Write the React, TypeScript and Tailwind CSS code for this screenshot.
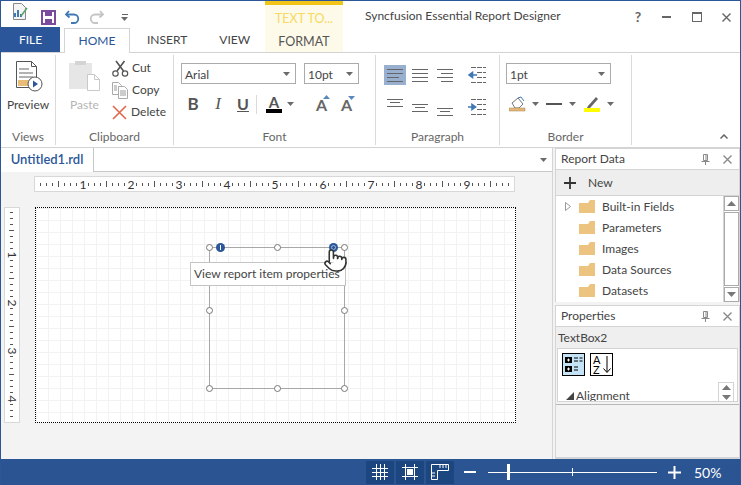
import { Pointer } from "lucide-react";

function Caret({ className = "" }: { className?: string }) {
  return (
    <svg width="7" height="4" viewBox="0 0 7 4" className={className}>
      <path d="M0 0h7L3.5 4z" fill="#6a6a6a" />
    </svg>
  );
}

function Combo({ label, width }: { label: string; width: string }) {
  return (
    <div className={`${width} h-[21px] border border-[#ababab] bg-white flex items-center justify-between pl-[3px] pr-[5px] text-[12px] text-[#444]`}>
      <span className="pt-[2px]">{label}</span>
      <Caret />
    </div>
  );
}

function RibbonGroup({ label, width, children }: { label: string; width: string; children: React.ReactNode }) {
  return (
    <div className={`${width} shrink-0 flex flex-col border-r border-[#dadada] my-[2px]`}>
      <div className="flex-1 relative">{children}</div>
      <div className="h-[17px] text-center text-[12px] text-[#666] leading-[17px]">{label}</div>
    </div>
  );
}

function PreviewIcon() {
  return (
    <svg width="30" height="34" viewBox="0 0 30 34">
      <path d="M3.5 1.5h15l5 5v21h-20z" fill="#fff" stroke="#555" />
      <path d="M18.500 1.500v5h5" fill="none" stroke="#555" />
      <path d="M6 9h10M6 13h14M6 17h14" stroke="#9a9a9a" strokeWidth="1.5" />
      <rect x="5" y="20" width="12" height="6" fill="#e9bd77" />
      <circle cx="22" cy="24" r="7" fill="#fff" stroke="#555" />
      <path d="M20 20.500l5 3.500-5 3.500z" fill="#2b579a" />
    </svg>
  );
}

function PasteIcon() {
  return (
    <svg width="31" height="31" viewBox="0 0 31 31">
      <rect x="0" y="3" width="23" height="26" fill="#e6e6e6" />
      <rect x="6" y="1" width="11" height="4" fill="#d4d4d4" />
      <path d="M18.5 14.5h7l5 5v11h-12z" fill="#fff" stroke="#c9c9c9" />
      <path d="M25.5 14.5v5h5" fill="none" stroke="#c9c9c9" />
    </svg>
  );
}

function CutIcon() {
  return (
    <svg width="17" height="17" viewBox="0 0 17 17" fill="none" stroke="#555" strokeWidth="1.2">
      <circle cx="3.5" cy="13.5" r="2.7" />
      <circle cx="13" cy="13.5" r="2.7" />
      <path d="M5 11L12.5 1M11.5 11L4 1" strokeWidth="1.6" />
    </svg>
  );
}

function CopyIcon() {
  return (
    <svg width="16" height="17" viewBox="0 0 16 17" fill="#fff" stroke="#aaa">
      <path d="M.5.5h6l3 3v9h-9z" />
      <path d="M6.5 4.5h6l3 3v9h-9z" />
      <path d="M2 4h3M2 6h3M2 8h3M8 9h6M8 11h6M8 13h6" stroke="#999" />
    </svg>
  );
}

function DeleteIcon() {
  return (
    <svg width="15" height="15" viewBox="0 0 15 15">
      <path d="M1 1l13 13M14 1L1 14" stroke="#e2674a" strokeWidth="1.6" />
    </svg>
  );
}

function AlignIcon({ rows }: { rows: [number, number][] }) {
  return (
    <svg width="22" height="20" viewBox="0 0 22 20" stroke="#666">
      {rows.map(([x, w], i) => (
        <path key={i} d={`M${x} ${4.5 + i * 4}h${w}`} />
      ))}
    </svg>
  );
}

function VAlignIcon({ y }: { y: number }) {
  return (
    <svg width="22" height="20" viewBox="0 0 22 20" stroke="#666">
      <path d={`M3 ${y + 0.5}h16M6 ${y + 3.5}h10M3 ${y + 7.5}h16`} />
    </svg>
  );
}

function IndentIcon({ flip }: { flip?: boolean }) {
  return (
    <svg width="18" height="18" viewBox="0 0 18 18">
      <path d="M3 1.5h15M9 6.5h9M9 11.5h9M3 16.5h15" stroke="#666" strokeDasharray="5 1" />
      {flip ? (
        <path d="M0 9h6M4 6.5L7.5 9 4 11.5z" stroke="#3f78b5" strokeWidth="1.6" fill="#3f78b5" />
      ) : (
        <path d="M2 9h7M4.5 6.5L1 9l3.5 2.5z" stroke="#3f78b5" strokeWidth="1.6" fill="#3f78b5" />
      )}
    </svg>
  );
}

function GrowA({ up }: { up?: boolean }) {
  return (
    <div className="relative w-[17px] h-[18px] text-[16px] leading-[20px] font-bold text-[#666] text-center">
      A
      <svg width="7" height="4" viewBox="0 0 7 4" className={`absolute right-0 ${up ? "top-0" : "top-px"}`}>
        <path d={up ? "M0 4h7L3.5 0z" : "M0 0h7L3.5 4z"} fill="#5b87bb" />
      </svg>
    </div>
  );
}

function FolderIcon() {
  return (
    <svg width="16" height="13" viewBox="0 0 16 13">
      <path d="M0 3h9l2-3h5v13H0z" fill="#ecc47f" />
    </svg>
  );
}

function PinIcon() {
  return (
    <svg width="9" height="11" viewBox="0 0 9 11" stroke="#8a8a8a" fill="none">
      <path d="M2.5.5h4v6h-4zM.5 7.5h8M4.500 7.500v3.500M5 1v6" />
    </svg>
  );
}

function CloseIcon({ color = "#8a8a8a", size = 9 }: { color?: string; size?: number }) {
  return (
    <svg width={size} height={size} viewBox="0 0 9 9">
      <path d="M.5.5l8 8M8.500.5l-8 8" stroke={color} strokeWidth="1.4" />
    </svg>
  );
}

function PanelHeader({ title }: { title: string }) {
  return (
    <div className="h-[21px] shrink-0 flex items-center pl-[5px] pr-[7px] text-[12px] text-[#444] border-b border-[#d4d4d4]">
      <span className="flex-1">{title}</span>
      <PinIcon />
      <span className="w-[13px]" />
      <CloseIcon />
    </div>
  );
}

function ScrollArrow({ up }: { up?: boolean }) {
  return (
    <svg width="9" height="5" viewBox="0 0 9 5">
      <path d={up ? "M0 5h9L4.500 0z" : "M0 0h9L4.500 5z"} fill="#777" />
    </svg>
  );
}

function RulerH() {
  const ticks = Array.from({ length: 80 }, (_, i) => i);
  return (
    <svg width="479" height="14" viewBox="0 0 479 14" className="block">
      {ticks.map((i) => {
        const x = 6 * i + 5.5;
        if (x > 476 || (i + 1) % 8 === 0) return null;
        return <path key={i} d={(i + 1) % 4 === 0 ? `M${x} 4v6` : `M${x} 6v3`} stroke="#555" />;
      })}
      {[1, 2, 3, 4, 5, 6, 7, 8, 9].map((n) => (
        <text key={n} x={48 * n} y={11.500} textAnchor="middle" fontSize="12" fill="#333">
          {n}
        </text>
      ))}
    </svg>
  );
}

function RulerV() {
  const ticks = Array.from({ length: 36 }, (_, i) => i);
  return (
    <svg width="14" height="214" viewBox="0 0 14 214" className="block">
      {ticks.map((i) => {
        const y = 6 * i + 4.5;
        if ((i + 1) % 8 === 0 || i === 35) return null;
        return <path key={i} d={(i + 1) % 4 === 0 ? `M4 ${y}h5` : `M5 ${y}h3`} stroke="#555" />;
      })}
      {[1, 2, 3, 4].map((n) => (
        <text key={n} x="0" y="0" transform={`translate(3 ${48 * n - 1}) rotate(90)`} textAnchor="middle" fontSize="12" fill="#333">
          {n}
        </text>
      ))}
    </svg>
  );
}

function Handle({ className }: { className: string }) {
  return <div className={`absolute w-[7px] h-[7px] rounded-full bg-white border border-[#777] ${className}`} />;
}

function StatusButton({ children }: { children: React.ReactNode }) {
  return <div className="w-[28px] h-[23px] bg-[#1c4680] flex items-center justify-center">{children}</div>;
}

export default function App() {
  return (
    <div className="w-[741px] h-[485px] flex flex-col bg-white border-x border-t border-[#2b579a] overflow-hidden font-['Lato',sans-serif]">
      {/* title + tabs */}
      <div className="h-[52px] shrink-0 flex border-b border-[#d4d4d4]">
        <div className="w-[264px] shrink-0 flex flex-col">
          <div className="h-[27px] flex items-center pl-[11px] relative">
            <svg width="16" height="18" viewBox="0 0 16 18" className="mb-[5px]">
              <path d="M1.500.5h8l4 4v12h-12z" fill="#f4f4f4" stroke="#888" />
              <path d="M3 14V10M6 14V7M9 14v-3" stroke="#3f78b5" strokeWidth="2" />
              <path d="M9 13l6-8" stroke="#5aa469" strokeWidth="1.500" />
            </svg>
            <svg width="15" height="15" viewBox="0 0 15 15" className="ml-[13px] mt-[7px]">
              <rect x="1" y="1" width="13" height="13" fill="none" stroke="#7b4a9e" strokeWidth="2" />
              <rect x="4" y="1" width="7" height="5" fill="#7b4a9e" />
              <rect x="4" y="9" width="7" height="5" fill="#7b4a9e" />
            </svg>
            <svg width="15" height="14" viewBox="0 0 15 14" className="ml-[9px] mt-[6px]" fill="none">
              <path d="M4 1L1 4.500 4.500 7.500" stroke="#3f78b5" strokeWidth="1.800" />
              <path d="M1.500 4.500H9a4.200 4.200 0 0 1 0 8.500H6" stroke="#3f78b5" strokeWidth="1.800" />
            </svg>
            <svg width="15" height="14" viewBox="0 0 15 14" className="ml-[9px] mt-[6px]" fill="none">
              <path d="M11 1l3 3.500-3.500 3" stroke="#c4c4c4" strokeWidth="1.800" />
              <path d="M13.500 4.500H6a4.200 4.200 0 0 0 0 8.500h3" stroke="#c4c4c4" strokeWidth="1.800" />
            </svg>
            <div className="ml-[17px] mt-[6px] flex flex-col items-center gap-[2px]">
              <div className="w-[6px] h-px bg-[#666]" />
              <Caret />
            </div>
          </div>
          <div className="h-[25px] flex items-end text-[12px] text-[#444]">
            <div className="w-[59px] h-[25px] bg-[#2b579a] text-white flex items-center justify-center">FILE</div>
            <div className="ml-[4px] w-[66px] h-[25px] bg-white border-x border-t border-[#d4d4d4] text-[#2b579a] flex items-center justify-center relative -mb-px z-10">HOME</div>
            <div className="ml-[17px]">
              <div className="h-[24px] leading-[24px]">INSERT</div>
            </div>
            <div className="ml-[32px]">
              <div className="h-[24px] leading-[24px]">VIEW</div>
            </div>
          </div>
        </div>
        <div className="w-[78px] shrink-0 bg-[#fefae9] border-t-[4px] border-[#f0c419] flex flex-col items-center text-[12.5px]">
          <div className="h-[23px] leading-[27px] text-[#f6d95f]">TEXT TO...</div>
          <div className="h-[24px] leading-[27px] text-[#555]">FORMAT</div>
        </div>
        <div className="flex-1 flex items-start relative h-[27px] text-[12px] text-[#444]">
          <div className="ml-[22px] mt-[7px] leading-[16px] flex-1">Syncfusion Essential Report Designer</div>
          <div className="flex items-center mt-[9px] pr-[9px]">
            <span className="text-[14px] font-bold leading-[14px] text-[#666] w-[10px] text-center">?</span>
            <div className="ml-[19px] w-[9px] h-[2px] bg-[#666]" />
            <div className="ml-[21px] w-[10px] h-[10px] border border-t-[2px] border-[#666]" />
            <span className="ml-[20px]"><CloseIcon color="#666" /></span>
          </div>
        </div>
      </div>

      {/* ribbon */}
      <div className="h-[95px] shrink-0 flex border-b border-[#d4d4d4] relative">
        <RibbonGroup label="Views" width="w-[55px]">
          <div className="flex flex-col items-center pt-[5px] text-[12px] text-[#444]">
            <PreviewIcon />
            <span className="mt-[2px]">Preview</span>
          </div>
        </RibbonGroup>
        <RibbonGroup label="Clipboard" width="w-[118px]">
          <div className="flex pl-[13px] pt-[5px] text-[12px] text-[#444]">
            <div className="flex flex-col items-center w-[31px]">
              <PasteIcon />
              <span className="mt-[5px] text-[#b4b4b4]">Paste</span>
            </div>
            <div className="ml-[12px] flex flex-col gap-[4px] -mt-px">
              <div className="h-[18px] flex items-center gap-[3px]"><CutIcon />Cut</div>
              <div className="h-[18px] flex items-center gap-[3px]"><CopyIcon /><span className="ml-[1px]">Copy</span></div>
              <div className="h-[18px] flex items-center gap-[3px]"><DeleteIcon /><span className="ml-[1px]">Delete</span></div>
            </div>
          </div>
        </RibbonGroup>
        <RibbonGroup label="Font" width="w-[202px]">
          <div className="pl-[7px] pt-[8px]">
            <div className="flex gap-[8px]">
              <Combo label="Arial" width="w-[115px]" />
              <Combo label="10pt" width="w-[55px]" />
            </div>
            <div className="flex items-center mt-[10px] pl-[5px] h-[20px] text-[#555]">
              <span className="w-[14px] text-center text-[17px] font-bold">B</span>
              <span className="ml-[11px] w-[14px] text-center text-[17px] italic font-['Liberation_Serif',serif]">I</span>
              <span className="ml-[11px] w-[14px] text-center text-[16px] font-bold underline">U</span>
              <div className="ml-[6px] w-px h-[19px] bg-[#dadada]" />
              <div className="ml-[9px] w-[16px] flex flex-col items-center">
                <span className="text-[15px] font-bold leading-[14px]">A</span>
                <div className="w-[16px] h-[4px] bg-black" />
              </div>
              <Caret className="ml-[5px]" />
              <div className="ml-[19px]"><GrowA up /></div>
              <div className="ml-[8px]"><GrowA /></div>
            </div>
          </div>
        </RibbonGroup>
        <RibbonGroup label="Paragraph" width="w-[124px]">
          <div className="pl-[8px] pt-[10px] flex">
            <div className="grid grid-cols-3 gap-x-[3px] gap-y-[11px] w-[72px]">
              <div className="bg-[#98afd0]"><AlignIcon rows={[[3, 16], [3, 16], [3, 12], [3, 16]]} /></div>
              <AlignIcon rows={[[3, 16], [3, 16], [3, 16], [3, 16]]} />
              <AlignIcon rows={[[3, 16], [7, 12], [3, 16], [7, 12]]} />
              <VAlignIcon y={3} />
              <VAlignIcon y={8} />
              <VAlignIcon y={12} />
            </div>
            <div className="ml-[12px] flex flex-col gap-[14px] pt-[1px]">
              <IndentIcon />
              <IndentIcon flip />
            </div>
          </div>
        </RibbonGroup>
        <RibbonGroup label="Border" width="w-[132px]">
          <div className="pl-[6px] pt-[8px]">
            <Combo label="1pt" width="w-[105px]" />
            <div className="flex items-center mt-[11px] h-[18px] pl-[3px]">
              <svg width="17" height="16" viewBox="0 0 17 16">
                <path d="M3 7l6-5 5 6-4 4H6z" fill="#fff" stroke="#777" />
                <path d="M9 2l3-1 3 4" fill="none" stroke="#3f78b5" />
                <rect x="0" y="12" width="16" height="3" fill="#e6b878" stroke="#a5834f" strokeWidth=".5" />
              </svg>
              <Caret className="ml-[6px]" />
              <div className="ml-[7px] w-[16px] h-[2px] bg-[#555]" />
              <Caret className="ml-[7px]" />
              <svg width="16" height="16" viewBox="0 0 16 16" className="ml-[8px]">
                <path d="M4 10l8-9 2 2-8 9H3z" fill="#666" />
                <rect x="0" y="12" width="16" height="4" fill="#ffff00" />
              </svg>
              <Caret className="ml-[7px]" />
            </div>
          </div>
        </RibbonGroup>
        <svg width="8" height="5" viewBox="0 0 8 5" className="absolute right-[12px] bottom-[8px]" fill="none">
          <path d="M.5 4.500l3.500-3.500 3.500 3.500" stroke="#666" strokeWidth="1.500" />
        </svg>
      </div>

      {/* body */}
      <div className="flex-1 min-h-0 flex bg-[#f3f3f3]">
        <div className="w-[552px] shrink-0 flex flex-col border-r border-[#d4d4d4]">
          <div className="h-[24px] shrink-0 flex bg-white relative">
            <div className="w-[92px] flex items-center justify-center text-[13px] text-[#2b579a] font-semibold">Untitled1.rdl</div>
            <div className="flex-1 border-l border-b border-[#c8c8c8] flex items-center justify-end pr-[5px]">
              <Caret />
            </div>
          </div>
          <div className="flex-1 relative min-h-0 pt-[5px] pl-[33px]">
            <div className="w-[479px] h-[14px] bg-white border border-[#d8d8d8] box-content -mt-px">
              <RulerH />
            </div>
            <div className="flex mt-[15px] -ml-[30px]">
              <div className="w-[14px] h-[214px] bg-white border border-[#d8d8d8] box-content">
                <RulerV />
              </div>
              <div className="ml-[15px] w-[481px] h-[216px] relative border border-dotted border-black bg-white bg-[linear-gradient(#f2f2f2_1px,transparent_1px),linear-gradient(90deg,#f2f2f2_1px,transparent_1px)] bg-[size:12px_12px]">
                {/* selected textbox sits on the design surface */}
                <div className="absolute left-[173px] top-[39px] w-[136px] h-[142px] border border-[#a8a8a8]" />
                <Handle className="left-[170px] top-[36px]" />
                <Handle className="left-[238px] top-[36px]" />
                <Handle className="left-[305px] top-[36px]" />
                <Handle className="left-[170px] top-[99px]" />
                <Handle className="left-[305px] top-[99px]" />
                <Handle className="left-[170px] top-[177px]" />
                <Handle className="left-[238px] top-[177px]" />
                <Handle className="left-[305px] top-[177px]" />
                <div className="absolute left-[180px] top-[35px] w-[9px] h-[9px] rounded-full bg-[#2b579a] flex items-center justify-center">
                  <div className="w-px h-[5px] bg-white" />
                </div>
                <div className="absolute left-[293px] top-[35px] w-[9px] h-[9px] rounded-full bg-[#2b579a] flex items-center justify-center">
                  <div className="w-[5px] h-[5px] rounded-full border border-[#9db6d8]" />
                </div>
                <div className="absolute left-[154px] top-[54px] w-[156px] h-[24px] bg-white border border-[#c4c4c4] flex items-center pl-[3px] text-[12px] text-[#444] whitespace-nowrap">
                  View report item properties
                </div>
                <Pointer size={25} fill="#fff" stroke="#333" strokeWidth={1.500} className="absolute left-[287px] top-[40px]" />
              </div>
            </div>
          </div>
        </div>

        {/* side panels */}
        <div className="ml-[2px] flex-1 min-w-0 flex flex-col">
          <div className="h-[154px] shrink-0 flex flex-col bg-white border-x border-t border-[#d4d4d4]">
            <PanelHeader title="Report Data" />
            <div className="h-[25px] shrink-0 bg-[#eeeeee] flex items-center pl-[8px] gap-[12px] text-[12px] text-[#444]">
              <svg width="12" height="12" viewBox="0 0 12 12"><path d="M6 0v12M0 6h12" stroke="#333" strokeWidth="1.800" /></svg>
              <span>New</span>
            </div>
            <div className="flex-1 flex min-h-0 border-t border-[#d4d4d4]">
              <div className="flex-1 text-[12px] text-[#444]">
                {["Built-in Fields", "Parameters", "Images", "Data Sources", "Datasets"].map((name, i) => (
                  <div key={name} className="h-[21px] flex items-center">
                    <div className="w-[23px] flex justify-end pr-[8px]">
                      {i === 0 && (
                        <svg width="6" height="9" viewBox="0 0 6 9"><path d="M.5.500l5 4-5 4z" fill="#fff" stroke="#999" /></svg>
                      )}
                    </div>
                    <FolderIcon />
                    <span className="ml-[7px] pt-[1px]">{name}</span>
                  </div>
                ))}
              </div>
              <div className="w-[16px] shrink-0 flex flex-col border-l border-[#d4d4d4]">
                <div className="h-[15px] border border-[#ababab] flex items-center justify-center"><ScrollArrow up /></div>
                <div className="flex-1 my-[1px] border border-[#ababab]" />
                <div className="h-[15px] border border-[#ababab] flex items-center justify-center"><ScrollArrow /></div>
              </div>
            </div>
          </div>
          <div className="flex-1 min-h-0 mt-[3px] flex flex-col bg-[#f3f3f3] border border-b-[2px] border-[#d4d4d4]">
            <div className="bg-white"><PanelHeader title="Properties" /></div>
            <div className="h-[21px] shrink-0 bg-[#efefef] flex items-center pl-[2px] text-[12px] text-[#444]">TextBox2</div>
            <div className="h-[54px] shrink-0 bg-white border border-[#d4d4d4] mx-px flex flex-col relative overflow-hidden">
              <div className="flex gap-[5px] pl-[4px] pt-[4px]">
                <svg width="23" height="23" viewBox="0 0 23 23">
                  <rect x=".5" y=".5" width="22" height="22" fill="#c5e3f7" stroke="#000" />
                  <rect x="3" y="4" width="7" height="6" fill="#000" />
                  <rect x="3" y="13" width="7" height="6" fill="#000" />
                  <path d="M5 7h3M6.500 5.500v3M5 16h3M6.500 14.500v3" stroke="#fff" />
                  <path d="M12 5h4M12 8h4M17.500 5h3M17.500 8h3M12 14h4M12 17h4" stroke="#000" />
                </svg>
                <div className="w-[23px] h-[23px] border border-black flex">
                  <span className="w-[11px] text-[11px] leading-[10px] text-black pt-px pl-[2px]">A<br />Z</span>
                  <svg width="10" height="21" viewBox="0 0 10 21"><path d="M5 2v16M1.500 14.500L5 18.500l3.500-4" stroke="#000" fill="none" /></svg>
                </div>
              </div>
              <div className="absolute left-[8px] top-[40px] flex items-center gap-[2px] text-[12px] leading-[14px] text-[#444]">
                <svg width="8" height="8" viewBox="0 0 8 8"><path d="M8 0v8H0z" fill="#444" /></svg>
                Alignment
              </div>
              <div className="absolute right-[3px] top-[33px] w-[16px] h-[20px] flex flex-col items-center justify-center gap-[5px] border border-[#d4d4d4]">
                <ScrollArrow up />
                <ScrollArrow />
              </div>
            </div>
            <div className="h-[3px] shrink-0 border-b border-[#b8b8b8]" />
          </div>
        </div>
      </div>

      {/* status bar */}
      <div className="h-[26px] shrink-0 bg-[#2b5592] flex items-center pl-[365px] text-white">
        <div className="flex gap-[2px]">
          <StatusButton>
            <svg width="16" height="16" viewBox="0 0 16 16" stroke="#fff"><path d="M0 4.500h16M0 8.500h16M0 12.500h16M4.500 0v16M8.500 0v16M12.500 0v16" /></svg>
          </StatusButton>
          <StatusButton>
            <svg width="16" height="16" viewBox="0 0 16 16" stroke="#fff" fill="none"><path d="M0 3.500h16M0 12.500h16M3.500 0v16M12.500 0v16" /><rect x="5" y="5" width="6" height="6" fill="#fff" stroke="none" /></svg>
          </StatusButton>
          <StatusButton>
            <svg width="18" height="16" viewBox="0 0 18 16" stroke="#fff" fill="none"><path d="M.5.500h17v6h-11v9h-6z" /><path d="M9 1v3M12 1v3M15 1v3M1 9h3M1 12h3" /></svg>
          </StatusButton>
        </div>
        <div className="ml-[10px] w-[12px] h-[2px] bg-white" />
        <div className="ml-[12px] w-[169px] h-[16px] flex items-center relative">
          <div className="w-full h-px bg-white" />
          <div className="absolute left-[19px] top-0 w-[3px] h-[16px] bg-white" />
          <div className="absolute left-[84px] top-[4px] w-px h-[8px] bg-white" />
        </div>
        <svg width="13" height="13" viewBox="0 0 13 13" className="ml-[11px]"><path d="M6.500 0v13M0 6.500h13" stroke="#fff" strokeWidth="2" /></svg>
        <span className="ml-[13px] text-[14px]">50%</span>
      </div>
    </div>
  );
}
